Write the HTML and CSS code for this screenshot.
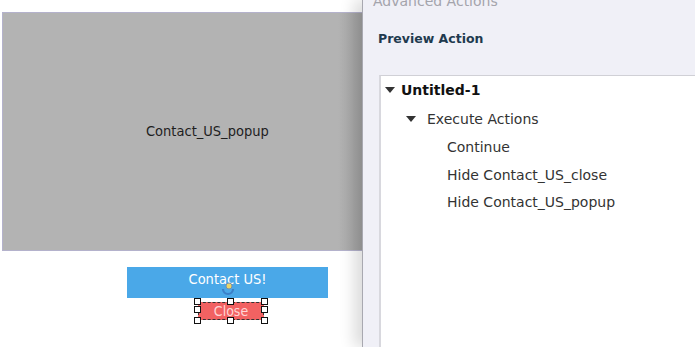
FILE: index.html
```html
<!DOCTYPE html>
<html lang="en">
<head>
    <meta charset="UTF-8">
    <title>Advanced Actions Preview</title>
    <link rel="stylesheet" href="styles.css">
</head>
<body>
    <div class="stage">
        <div class="popup-box">
            <span class="popup-label">Contact_US_popup</span>
        </div>
        <div class="contact-button">Contact US!</div>
        <div class="close-button">
            Close
            <span class="handle h-tl"></span>
            <span class="handle h-tm"></span>
            <span class="handle h-tr"></span>
            <span class="handle h-ml"></span>
            <span class="handle h-mr"></span>
            <span class="handle h-bl"></span>
            <span class="handle h-bm"></span>
            <span class="handle h-br"></span>
        </div>
        <svg class="cursor-spin" width="16" height="16" viewBox="0 0 16 16">
            <path d="M3 9 A5 5 0 0 0 13 9" fill="none" stroke="#3a7fc8" stroke-width="2.2"/>
            <circle cx="9" cy="6" r="3" fill="#e9d66b" stroke="#7a8fa8" stroke-width="1"/>
        </svg>
    </div>

    <div class="dialog">
        <div class="dialog-title">Advanced Actions</div>
        <div class="dialog-heading">Preview Action</div>
        <div class="tree">
            <div class="tree-row root"><span class="caret"></span>Untitled-1</div>
            <div class="tree-row level1"><span class="caret"></span>Execute Actions</div>
            <div class="tree-row level2">Continue</div>
            <div class="tree-row level2">Hide Contact_US_close</div>
            <div class="tree-row level2">Hide Contact_US_popup</div>
        </div>
    </div>
</body>
</html>
```

FILE: styles.css
```css
/* Page */
body {
    margin: 0;
    width: 695px;
    height: 347px;
    overflow: hidden;
    background: #fff;
    font-family: 'DejaVu Sans', Verdana, sans-serif;
    position: relative;
}

/* Stage (left canvas) */
.stage {
    position: relative;
    width: 362px;
    height: 347px;
}

.popup-box {
    position: absolute;
    left: 2px;
    top: 12px;
    width: 380px;
    height: 237px;
    background: linear-gradient(to right, #b3b3b3 0, #b3b3b3 335px, #a2a2a2 360px);
    border: 1px solid #b4b2cc;
    border-right: none;
    display: flex;
    align-items: center;
}

.popup-label {
    margin-left: 143px;
    margin-top: -2px;
    font-family: 'DejaVu Sans Condensed', 'DejaVu Sans', sans-serif;
    font-size: 14.5px;
    color: #1e1e1e;
}

.contact-button {
    position: absolute;
    left: 127px;
    top: 267px;
    width: 201px;
    height: 31px;
    background: #4aa8e8;
    color: #fff;
    font-family: 'DejaVu Sans Condensed', 'DejaVu Sans', sans-serif;
    font-size: 14.5px;
    text-align: center;
    line-height: 24px;
}

.close-button {
    position: absolute;
    left: 198px;
    top: 302px;
    width: 64px;
    height: 16px;
    background: #f26262;
    color: #ffd6d6;
    border: 1px dashed #333;
    font-family: 'DejaVu Sans Condensed', 'DejaVu Sans', sans-serif;
    font-size: 14px;
    text-align: center;
    line-height: 16px;
}

.handle {
    position: absolute;
    width: 5px;
    height: 5px;
    background: #fff;
    border: 1.5px solid #111;
}

.h-tl { left: -5px; top: -5px; }
.h-tm { left: 28px; top: -5px; }
.h-tr { right: -5px; top: -5px; }
.h-ml { left: -5px; top: 3px; }
.h-mr { right: -5px; top: 3px; }
.h-bl { left: -5px; bottom: -5px; }
.h-bm { left: 28px; bottom: -5px; }
.h-br { right: -5px; bottom: -5px; }

.cursor-spin {
    position: absolute;
    left: 220px;
    top: 280px;
}

/* Advanced Actions dialog */
.dialog {
    position: absolute;
    left: 362px;
    top: 0;
    right: 0;
    bottom: 0;
    background: #f0f0f7;
    border-left: 1px solid #a8a8b0;
    box-shadow: -8px 0 14px rgba(0, 0, 0, 0.14);
    display: flex;
    flex-direction: column;
}

.dialog-title {
    margin: -7px 0 0 10px;
    height: 15px;
    font-size: 14px;
    color: #a4a4ac;
}

.dialog-heading {
    margin: 23px 0 0 15px;
    font-size: 12.5px;
    font-weight: bold;
    color: #1f3a4f;
}

.tree {
    flex: 1;
    margin: 29px 0 0 16px;
    background: #fff;
    border-left: 2px solid #d8d8de;
    border-top: 1px solid #d0d0d6;
    padding-top: 6px;
}

.tree-row {
    height: 28px;
    line-height: 16px;
    font-size: 14px;
    color: #333;
    display: flex;
    align-items: flex-start;
}

.root {
    padding-left: 4px;
    font-weight: bold;
    color: #111;
    height: 29px;
}

.level1 {
    padding-left: 25px;
}

.level2 {
    padding-left: 66px;
    height: 27.5px;
}

.caret {
    width: 0;
    height: 0;
    margin: 5px 6px 0 0;
    border-left: 5px solid transparent;
    border-right: 5px solid transparent;
    border-top: 6px solid #333;
}

.level1 .caret {
    margin-right: 11px;
}
```
